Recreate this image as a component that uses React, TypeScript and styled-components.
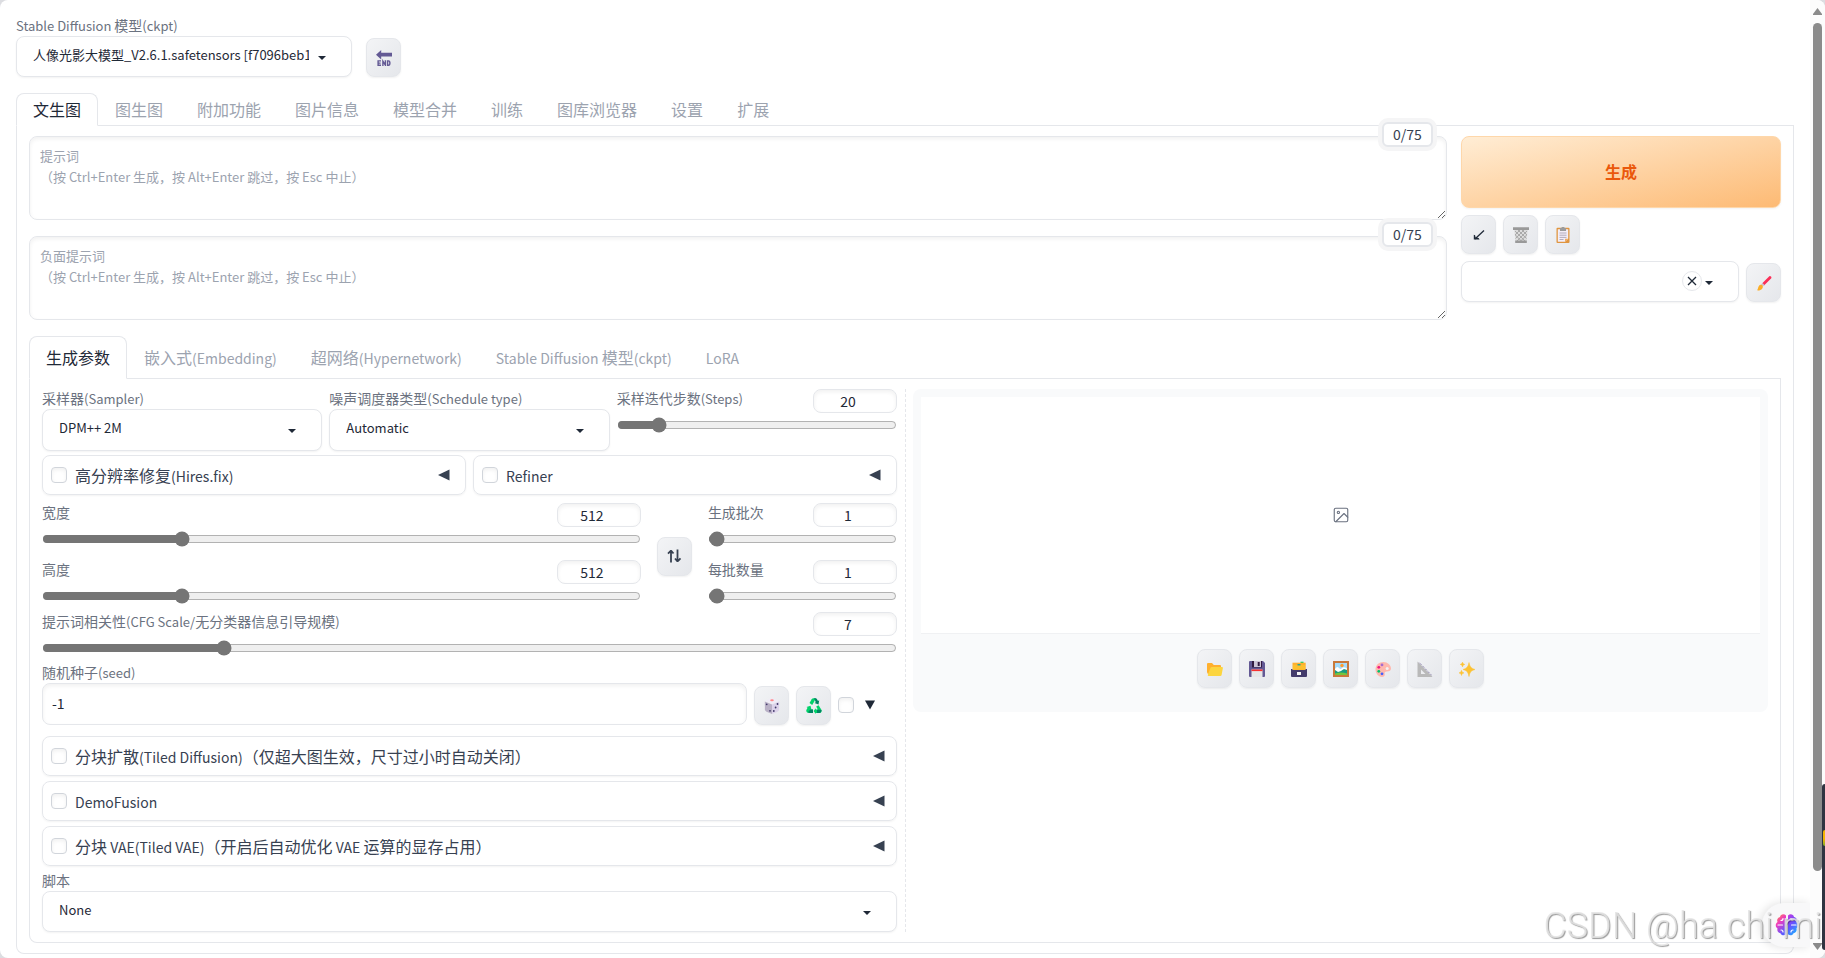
import React, { useState } from 'react';
import styled, { createGlobalStyle, css } from 'styled-components';

const line = '#e5e7eb';
const ink = '#1f2937';
const muted = '#6b7280';
const faint = '#9ca3af';

const GlobalStyle = createGlobalStyle`
  *, *::before, *::after { box-sizing: border-box; }
  body {
    margin: 0;
    background: #dcdde1;
    color: ${ink};
    font-family: "Noto Sans CJK SC", "Noto Sans", sans-serif;
    font-size: 14px;
    line-height: 20px;
  }
  button, input, select, textarea { font: inherit; color: inherit; margin: 0; }
`;

/* ---------- page frame ---------- */

const Page = styled.div`
  display: flex;
  min-height: 100vh;
  background: #fff;
  border-radius: 8px;
  overflow: hidden;
`;

const Main = styled.main`
  flex: 1;
  min-width: 0;
  padding: 16px 16px 4px;
`;

const ScrollRail = styled.aside`
  position: sticky;
  top: 0;
  width: 15px;
  height: 100vh;
  padding: 8px 3px;
  background: #fcfcfc;
  display: flex;
  flex-direction: column;
  align-items: center;
  gap: 7px;
`;

const ScrollTrack = styled.div`
  flex: 1;
  width: 9px;
`;

const ScrollThumb = styled.div`
  height: 93%;
  border-radius: 5px;
  background: #8b8b8b;
`;

/* ---------- shared controls ---------- */

const Latin = styled.span<{ $size: number }>`
  font-size: ${(p) => p.$size}px;
  line-height: 1;
`;

const Label = styled.label`
  display: block;
  margin-bottom: 2px;
  color: ${muted};
  line-height: 18px;
  white-space: nowrap;
`;

const SelectBox = styled.div<{ $tall?: boolean }>`
  position: relative;
  display: flex;
  height: ${(p) => (p.$tall ? 42 : 41)}px;
  border: 1px solid ${line};
  border-radius: 8px;
  background: #fff;
  box-shadow: 0 1px 2px rgba(0, 0, 0, 0.05);
`;

const SelectInput = styled.select`
  appearance: none;
  flex: 1;
  min-width: 0;
  border: 0;
  outline: 0;
  background: transparent;
  padding: 0 42px 4px 16px;
  font-size: 13px;
  text-overflow: clip;
`;

const CaretSlot = styled.span`
  position: absolute;
  right: 20px;
  top: 11px;
  display: flex;
  pointer-events: none;
`;

const ClearButton = styled.button`
  position: absolute;
  right: 36px;
  top: 9px;
  width: 20px;
  height: 20px;
  padding: 0;
  display: grid;
  place-items: center;
  border: 1px solid ${line};
  border-radius: 50%;
  background: #fff;
`;

const ToolButton = styled.button`
  flex: none;
  width: 35px;
  height: 39px;
  padding: 0;
  display: grid;
  place-items: center;
  border: 1px solid ${line};
  border-radius: 8px;
  background: linear-gradient(to bottom right, #f3f4f6, #e5e7eb);
  box-shadow: 0 1px 2px rgba(0, 0, 0, 0.06);
`;

const Checkbox = styled.input`
  appearance: none;
  flex: none;
  width: 16px;
  height: 16px;
  border: 1px solid #d1d5db;
  border-radius: 4px;
  background: #fff;
  box-shadow: inset 0 2px 4px rgba(0, 0, 0, 0.06);
`;

const PlainButton = styled.button`
  display: flex;
  padding: 0;
  border: 0;
  background: transparent;
`;

const insetField = css`
  border: 1px solid ${line};
  border-radius: 8px;
  background: #fff;
  outline: 0;
  box-shadow: inset 0 2px 4px rgba(0, 0, 0, 0.06);
`;

/* ---------- tabs ---------- */

const TabBar = styled.div`
  display: flex;
  border-bottom: 1px solid ${line};
`;

const Tab = styled.button<{ $active?: boolean; $tall?: boolean }>`
  height: ${(p) => (p.$tall ? 43 : 33)}px;
  margin-bottom: -1px;
  padding: 0 16px 2px;
  border: 1px solid ${(p) => (p.$active ? line : 'transparent')};
  border-bottom-color: ${(p) => (p.$active ? '#fff' : 'transparent')};
  border-radius: 8px 8px 0 0;
  background: ${(p) => (p.$active ? '#fff' : 'transparent')};
  color: ${(p) => (p.$active ? ink : faint)};
  font-size: 16px;
  line-height: 24px;
  white-space: nowrap;
`;

const TabPanel = styled.div`
  border: 1px solid ${line};
  border-top: 0;
  border-radius: 0 0 8px 8px;
  padding: 10px 12px;
`;

/* ---------- header and prompts ---------- */

const CheckpointRow = styled.div`
  display: flex;
  align-items: flex-end;
  gap: 14px;
  margin-bottom: 16px;
`;

const CheckpointField = styled.div`
  width: 336px;
`;

const PromptArea = styled.section`
  display: flex;
  gap: 14px;
  margin-bottom: 16px;
`;

const PromptColumn = styled.div`
  flex: 1;
  min-width: 0;
  display: flex;
  flex-direction: column;
  gap: 16px;
`;

const PromptBox = styled.div`
  position: relative;
  display: flex;
`;

const PromptInput = styled.textarea`
  ${insetField}
  flex: 1;
  height: 84px;
  padding: 8px 10px;
  font-size: 13px;
  line-height: 21px;
  resize: vertical;
  &::placeholder { color: ${faint}; opacity: 1; }
`;

const TokenCounter = styled.span`
  position: absolute;
  top: -14px;
  right: 14px;
  width: 51px;
  height: 25px;
  border: 2px solid ${line};
  border-radius: 6px;
  background: #fff;
  box-shadow: 0 0 0 4px #f5f5f6;
  color: #374151;
  line-height: 20px;
  text-align: center;
`;

const ActionColumn = styled.div`
  flex: 0 0 320px;
  display: flex;
  flex-direction: column;
  gap: 7px;
`;

const GenerateButton = styled.button`
  height: 72px;
  padding: 0 0 2px;
  border: 1px solid #fed7aa;
  border-radius: 8px;
  background: linear-gradient(to bottom right, #ffedd5, #fdba74);
  box-shadow: 0 1px 2px rgba(0, 0, 0, 0.05);
  color: #ea580c;
  font-size: 16px;
  font-weight: 700;
`;

const ToolRow = styled.div`
  display: flex;
  align-items: flex-end;
  gap: 7px;
`;

const Grow = styled.div`
  flex: 1;
  min-width: 0;
`;

/* ---------- parameters ---------- */

const Workspace = styled.div`
  display: grid;
  grid-template-columns: 1fr 1fr;
  column-gap: 16px;
`;

const Params = styled.section`
  position: relative;
  min-width: 0;
  display: flex;
  flex-direction: column;
  &::after {
    content: "";
    position: absolute;
    top: 0;
    bottom: 0;
    right: -9px;
    border-right: 1px dashed ${line};
  }
`;

const SamplerRow = styled.div`
  display: grid;
  grid-template-columns: repeat(3, 1fr);
  gap: 7px;
  margin-bottom: 4px;
`;

const PairRow = styled.div`
  display: grid;
  grid-template-columns: 1fr 1fr;
  gap: 7px;
  margin-bottom: 8px;
`;

const AccordionBox = styled.div<{ $wide?: boolean }>`
  display: flex;
  align-items: center;
  justify-content: space-between;
  height: 40px;
  padding: 0 ${(p) => (p.$wide ? 11 : 15)}px 0 8px;
  border: 1px solid ${line};
  border-radius: 8px;
  box-shadow: 0 1px 2px rgba(0, 0, 0, 0.05);
`;

const AccordionLabel = styled.label`
  display: flex;
  align-items: center;
  gap: 8px;
  color: #374151;
  font-size: 16px;
  line-height: 24px;
`;

const SliderBox = styled.div`
  height: 45px;
`;

const SliderHead = styled.div`
  display: flex;
  justify-content: space-between;
  height: 24px;
`;

const NumberInput = styled.input`
  ${insetField}
  appearance: textfield;
  width: 84px;
  height: 24px;
  padding: 0 22px 0 8px;
  text-align: center;
  &::-webkit-inner-spin-button { appearance: none; }
`;

const Range = styled.input`
  display: block;
  width: 100%;
  height: 16px;
  margin-top: 4px;
  accent-color: #757575;
  padding: 0 1px;
`;

const SizeRow = styled.div`
  display: flex;
  align-items: center;
  gap: 16px;
  margin-bottom: 7px;
`;

const SliderStack = styled.div<{ $share: number }>`
  flex: ${(p) => p.$share} 1 0;
  min-width: 0;
  display: flex;
  flex-direction: column;
  gap: 12px;
`;

const SwapCell = styled.div`
  padding-top: 4px;
`;

const SeedRow = styled.div`
  display: flex;
  align-items: flex-end;
  gap: 7px;
  margin: 6px 0 11px;
`;

const SeedInput = styled.input`
  ${insetField}
  display: block;
  width: 100%;
  height: 42px;
  padding: 0 9px 2px;
`;

const ExtraToggle = styled.div`
  display: flex;
  align-items: center;
  gap: 10px;
  width: 59px;
  padding-bottom: 12px;
`;

const Stack = styled.div`
  display: flex;
  flex-direction: column;
  gap: 5px;
`;

/* ---------- gallery ---------- */

const Gallery = styled.section`
  align-self: start;
  padding: 8px 8px 24px;
  border-radius: 8px;
  background: #f9fafb;
`;

const Preview = styled.div`
  display: grid;
  place-items: center;
  height: 237px;
  margin-bottom: 15px;
  border-bottom: 1px solid #f0f1f3;
  background: #fff;
`;

const GalleryTools = styled.div`
  display: flex;
  justify-content: center;
  gap: 7px;
`;

/* ---------- floating items ---------- */

const AssistantPill = styled.button`
  position: fixed;
  right: 15px;
  bottom: 11px;
  width: 48px;
  height: 44px;
  padding: 0 0 0 13px;
  display: flex;
  align-items: center;
  border: 0;
  border-radius: 22px 0 0 22px;
  background: #f8f8f9;
  box-shadow: -2px 0 10px rgba(0, 0, 0, 0.12);
  clip-path: inset(-16px 0 -11px -16px);
`;

const SideDock = styled.div`
  position: fixed;
  right: 0;
  bottom: 8px;
  width: 3px;
  height: 166px;
  padding-top: 46px;
  border-radius: 3px 0 0 3px;
  background: #2f3441;
  overflow: hidden;
`;

const DockLight = styled.div`
  height: 16px;
  margin-left: 1px;
  border-radius: 8px 0 0 8px;
  background: linear-gradient(#f5b400 55%, #7fae2c);
`;

const Watermark = styled.div`
  position: fixed;
  right: 3px;
  bottom: 12px;
  color: rgba(228, 228, 228, 0.85);
  font-family: Roboto, "Liberation Sans", sans-serif;
  font-size: 36px;
  font-weight: 300;
  line-height: 40px;
  white-space: nowrap;
  text-shadow: 1px 1px 1px rgba(0, 0, 0, 0.4);
  pointer-events: none;
`;

/* ---------- icons ---------- */

const Icon = ({ children, size = 16 }: { children: React.ReactNode; size?: number }) => (
  <svg width={size} height={size} viewBox="0 0 16 16" aria-hidden="true">{children}</svg>
);

const Caret = () => (
  <svg width="18" height="18" viewBox="0 0 18 18" fill={ink} aria-hidden="true"><path d="M5 8l4 4 4-4z" /></svg>
);

const Triangle = ({ dir }: { dir: 'left' | 'down' }) => (
  <svg width="12" height="12" viewBox="0 0 12 12" fill={dir === 'left' ? '#374151' : ink} aria-hidden="true">
    <path d={dir === 'left' ? 'M0 6L11.500 .5v11z' : 'M1 1.500h10L6 10.500z'} />
  </svg>
);

const RailArrow = ({ up }: { up?: boolean }) => (
  <svg width="9" height="8" viewBox="0 0 9 8" fill="#8b8b8b" aria-hidden="true">
    <path d={up ? 'M4.500 0L9 6v1H0V6z' : 'M0 1h9v1L4.500 8 0 2z'} />
  </svg>
);

const EndIcon = () => (
  <Icon>
    <path d="M0 4.700L5.200 0v2.800H16v3.800H5.200v2.800z" fill="#635994" />
    <g fill="none" stroke="#635994" strokeWidth="1.400">
      <path d="M5 10.900H2.100v4.400H5M2.100 13.100h2.500M6.900 15.900v-4.700l2.500 4v-4.900M11.600 10.900v4.400h.9q1.400 0 1.400-2.200t-1.400-2.200z" />
    </g>
  </Icon>
);

const ArrowIcon = () => (
  <Icon>
    <path d="M13 3.500L4 12" fill="none" stroke="#1f2937" strokeWidth="1.300" />
    <path d="M2.800 7.800l1.300.4.500 2.300 3 .6 1 1.400H2.800z" fill="#1f2937" />
  </Icon>
);

const TrashIcon = () => (
  <Icon>
    <path d="M1.300 3h13.400l-1.200 12H2.500z" fill="#dcdcdc" />
    <path d="M2 4l10 10M5 3l8.500 8.500M9 3l5 5M2.300 8l6.500 6.500M14 4L4 14M11 3L2.500 11.500M7 3L2 8M13.700 8l-6.500 6.500" stroke="#a3a3a3" strokeWidth=".9" />
    <path d="M0 .3h16V3H0zM2.200 13.600h11.600V16H2.200z" fill="#999" />
  </Icon>
);

const ClipboardIcon = () => (
  <Icon>
    <rect x="1.500" y=".7" width="13" height="15.300" rx="1" fill="#e0953f" />
    <path d="M2.800 2.300h10.400v9.400l-3.200 3H2.800z" fill="#f3eef8" />
    <path d="M10 14.700v-3h3.200z" fill="#efad62" />
    <path d="M5 1h1.500a1.500 1.500 0 013 0H11v3H5z" fill="#9b9b9b" />
    <path d="M4.500 6h7M4.500 8.200h7M4.500 10.400h7M4.500 12.500h4" stroke="#b4acbc" />
  </Icon>
);

const BrushIcon = () => (
  <Icon>
    <path d="M6 8.500L13.300 1.200a1.500 1.500 0 012 2L8 10.500z" fill="#fb2f58" />
    <path d="M5 9.500l1.500-1.500 2 2L7 11.500z" fill="#c9c3d3" />
    <path d="M1 15.300c1.500-1 .8-5 3.600-5.500 2-.2 3 2 1.700 3.600C5 15.300 2.500 15.600 1 15.300z" fill="#fcae27" />
  </Icon>
);

const SwapIcon = () => (
  <Icon>
    <path d="M5 14.500V3M2 5.700L5 2.500M11.500 1.500V13M14.500 10.300L11.500 13.500M5 2.500l2.500 3M11.500 13.500l-2.500-3" fill="none" stroke="#374151" strokeWidth="1.800" />
  </Icon>
);

const DiceIcon = () => (
  <Icon>
    <path d="M8 0l7 3-7 3-7-3z" fill="#f0ebf7" />
    <ellipse cx="8" cy="2.200" rx="1.800" ry="1" fill="#f88" />
    <path d="M.8 3.500L8 6.500V16l-5.500-2.300Q1 13 .9 11.500z" fill="#b9b0c6" />
    <path d="M15.200 3.500L8 6.500V16l5.500-2.300q1.500-.7 1.600-2.200z" fill="#dcd2ea" />
    <g fill="#433b6b"><circle cx="2.700" cy="6.300" r=".9" /><circle cx="6" cy="12.800" r=".9" /><circle cx="13.500" cy="6" r=".9" /><circle cx="11.600" cy="9.500" r=".9" /><circle cx="9.800" cy="13" r=".9" /></g>
  </Icon>
);

const RecycleIcon = () => (
  <Icon>
    <path d="M5.700 1.200Q6.300.2 7.500.2h2.300L8 4 6.200 7 3.500 5z" fill="#00d26a" />
    <path d="M8 .2h1.700q.8 0 1.300 1l1 1.700 1.200-.7L12.500 6.500 8.500 5l1.300-.8z" fill="#008463" />
    <path d="M12.600 7.200l2.800 4.500q.8 1.700-1 3.300H9.800v1L7.500 13l2.300-2.800v1.300h2l-1.600-3z" fill="#00d26a" />
    <path d="M15.600 12.300q-.1 2.200-2 2.700H11v-3.300h2.500z" fill="#008463" />
    <path d="M7 11.600V15H2.500Q.8 15 .3 13.200q-.2-.8.3-1.700l1-1.800L.5 9l4-1.200 1 4-1-.6-.3.400z" fill="#00d26a" />
    <path d="M4.300 11.600H7V15H3.500q-1.500-.2-1-1.500z" fill="#008463" />
  </Icon>
);

const FolderIcon = () => (
  <Icon>
    <path d="M0 3q0-1 1-1h4l1.800 2H13q1 0 1 1v8H2q-2 0-2-2z" fill="#ffb02e" />
    <path d="M3.400 7q.3-1 1.300-1H15q1 0 .9 1l-1.300 7q-.2 1-1.300 1H1.700q-1.200 0-.9-1z" fill="#fcd53f" />
  </Icon>
);

const FloppyIcon = () => (
  <Icon>
    <path d="M1 0h13l2 2v13q0 1-1 1H1q-1 0-1-1V1q0-1 1-1z" fill="#635994" />
    <path d="M3 0h10v6.500H3z" fill="#321b41" />
    <path d="M5 0h7v6H5z" fill="#cdc4d6" />
    <path d="M8.700 1h2v4h-2z" fill="#321b41" />
    <path d="M2.500 8.500h11V16h-11z" fill="#e6e6e6" />
    <path d="M2.500 8.500h11v1.600h-11z" fill="#f8312f" />
  </Icon>
);

const CardBoxIcon = () => (
  <Icon>
    <path d="M9.500.7h3v2h-3z" fill="#00d26a" />
    <path d="M1.500 1.700h13.200V10H1.500z" fill="#ffb02e" />
    <path d="M2 4h12v4.500H2z" fill="#fcc02f" />
    <path d="M6.500 3h3v1.500h-3z" fill="#26a69a" />
    <path d="M0 8h1.500v1h13V8H16v7q0 1-1 1H1q-1 0-1-1z" fill="#433b6b" />
    <path d="M6 11h4v3H6z" fill="#f4f4f4" />
  </Icon>
);

const FrameIcon = () => (
  <Icon>
    <path d="M0 0h16v16H0z" fill="#c8793b" />
    <path d="M2 2h12v12H2z" fill="#a5dcfb" />
    <circle cx="9" cy="4.500" r="1.700" fill="#ff9d2e" />
    <path d="M2 8q2-3 3.500-1.500T8 8q2-3 6-.5V12H2z" fill="#fff" />
    <path d="M2 9l3 2 3-1 3-2 3 1v5H2z" fill="#179c81" />
    <path d="M2 12.500q6-2 12 0V14H2z" fill="#74c43c" />
  </Icon>
);

const PaletteIcon = () => (
  <Icon>
    <path d="M8.500 1C4 1 .5 4 .5 8.500S4 16 7 16c2 0 3.300-1.500 2.700-3-.5-1.400.3-2.500 2-2.500 3 0 4.300-1 4.300-3C16 4 12.500 1 8.500 1z" fill="#ffb8ae" />
    <circle cx="12.200" cy="7.500" r="1.500" fill="#f2f2f4" />
    <circle cx="7" cy="3.900" r="1.400" fill="#a56bd0" />
    <circle cx="3.800" cy="6.300" r="1.400" fill="#f1177f" />
    <circle cx="3.800" cy="10.300" r="1.400" fill="#00c26a" />
    <circle cx="7" cy="12.800" r="1.400" fill="#3f5fff" />
  </Icon>
);

const RulerIcon = () => (
  <Icon>
    <path d="M.5.5L15.500 16H.5z" fill="#b9b9b9" />
    <path d="M4 8.500l4.500 4.500H4z" fill="#ecedf0" />
    <path d="M2.500 1.800L15 14.700" stroke="#6c5f96" strokeDasharray="1 1.200" />
  </Icon>
);

const SparkIcon = () => (
  <Icon>
    <path d="M10 1.500c.9 4.300 2 5.500 6 7-4 1.200-5.100 2.700-6 7-.9-4.300-2-5.800-6-7 4-1.500 5.100-2.700 6-7zM3.500 1c.4 1.500.8 2 2.300 2.400C4.300 3.800 3.900 4.300 3.500 6 3.100 4.300 2.700 3.800 1.200 3.400 2.700 3 3.100 2.500 3.500 1zM2.500 9.300c.4 1.600.9 2.200 2.500 2.600-1.600.4-2.100 1-2.500 2.600C2.100 12.900 1.600 12.300 0 11.900c1.600-.4 2.100-1 2.500-2.600z" fill="#fcc234" stroke="#fcc234" strokeWidth=".5" />
  </Icon>
);

const PictureIcon = () => (
  <svg width="18" height="18" viewBox="0 0 24 24" fill="none" stroke="#6b7280" strokeWidth="1.500" strokeLinecap="round" strokeLinejoin="round" aria-hidden="true">
    <rect x="3" y="3" width="18" height="18" rx="2" />
    <circle cx="8.500" cy="8.500" r="1.500" />
    <path d="M21 15l-5-5L5 21" />
  </svg>
);

const BrainIcon = () => (
  <svg width="24" height="24" viewBox="0 0 24 24" aria-hidden="true">
    <defs>
      <linearGradient id="brainLeft" x1="0" y1="0" x2=".5" y2="1">
        <stop offset="0" stopColor="#ff9a2e" />
        <stop offset=".45" stopColor="#ee3ac0" />
        <stop offset="1" stopColor="#5b5bff" />
      </linearGradient>
      <linearGradient id="brainRight" x1="0" y1="0" x2=".5" y2="1">
        <stop offset="0" stopColor="#c43be0" />
        <stop offset=".5" stopColor="#6a4dff" />
        <stop offset="1" stopColor="#25a5ff" />
      </linearGradient>
    </defs>
    <path d="M11 2.500C9 .5 5.500 1.200 5 4 2.500 4.500 1.500 7 2.500 9 .2 10.500.2 14 2.500 15.500c-.8 2.700 1 4.500 3 4.700.8 2.300 3.800 2.800 5.500 1z" fill="url(#brainLeft)" />
    <path d="M13 2.500c2-2 5.500-1.300 6 1.500 2.500.5 3.500 3 2.500 5 2.300 1.500 2.300 5 0 6.500.8 2.700-1 4.500-3 4.700-.8 2.300-3.800 2.800-5.500 1z" fill="url(#brainRight)" />
    <path d="M3 12h4.500M6 7.500q2 0 2-2M6 17q2 0 2 2M21 12h-4.500M18 7.500q-2 0-2-2M18 17q-2 0-2 2" fill="none" stroke="#fff" strokeWidth="1.200" strokeLinecap="round" />
  </svg>
);

/* ---------- composed parts ---------- */

/* Sets Latin runs a step smaller so they balance with the Chinese characters. */
const Mixed = ({ text, size }: { text: string; size: number }) => (
  <span>
    {text.split(/([\x20-\x7e]+)/).filter(Boolean).map((run, i) =>
      /^[\x20-\x7e]/.test(run) ? <Latin key={i} $size={size}>{run}</Latin> : run,
    )}
  </span>
);

type DropdownProps = { id: string; label?: string; value: string; tall?: boolean; clearable?: boolean };

const Dropdown = ({ id, label, value, tall, clearable }: DropdownProps) => (
  <div>
    {label && <Label htmlFor={id}><Mixed text={label} size={13} /></Label>}
    <SelectBox $tall={tall}>
      <SelectInput id={id} aria-label={label ?? 'Styles'}>
        <option>{value}</option>
      </SelectInput>
      {clearable && (
        <ClearButton aria-label="Clear">
          <svg width="10" height="10" viewBox="0 0 10 10" stroke={ink} strokeWidth="1.300" aria-hidden="true"><path d="M1 1l8 8M9 1L1 9" /></svg>
        </ClearButton>
      )}
      <CaretSlot><Caret /></CaretSlot>
    </SelectBox>
  </div>
);

type SliderProps = { id: string; label: string; min: number; max: number; initial: number; step?: number };

const Slider = ({ id, label, min, max, initial, step = 1 }: SliderProps) => {
  const [value, setValue] = useState(initial);
  const update = (e: React.ChangeEvent<HTMLInputElement>) => setValue(Number(e.target.value));
  return (
    <SliderBox>
      <SliderHead>
        <Label htmlFor={id}><Mixed text={label} size={13} /></Label>
        <NumberInput id={id} type="number" value={value} onChange={update} />
      </SliderHead>
      <Range type="range" aria-label={label} min={min} max={max} step={step} value={value} onChange={update} />
    </SliderBox>
  );
};

const Accordion = ({ title, wide }: { title: string; wide?: boolean }) => (
  <AccordionBox $wide={wide}>
    <AccordionLabel><Checkbox type="checkbox" /><Mixed text={title} size={14} /></AccordionLabel>
    <PlainButton aria-label={`Expand ${title}`}><Triangle dir="left" /></PlainButton>
  </AccordionBox>
);

const Prompt = ({ title }: { title: string }) => (
  <PromptBox>
    <PromptInput aria-label={title} placeholder={`${title}\n（按 Ctrl+Enter 生成，按 Alt+Enter 跳过，按 Esc 中止）`} />
    <TokenCounter>0/75</TokenCounter>
  </PromptBox>
);

const topTabs = ['文生图', '图生图', '附加功能', '图片信息', '模型合并', '训练', '图库浏览器', '设置', '扩展'];
const subTabs = ['生成参数', '嵌入式(Embedding)', '超网络(Hypernetwork)', 'Stable Diffusion 模型(ckpt)', 'LoRA'];
const galleryTools: [string, React.ReactNode][] = [
  ['Open folder', <FolderIcon />],
  ['Save', <FloppyIcon />],
  ['Save zip', <CardBoxIcon />],
  ['Send to img2img', <FrameIcon />],
  ['Send to inpaint', <PaletteIcon />],
  ['Send to extras', <RulerIcon />],
  ['Upscale', <SparkIcon />],
];

export default function App() {
  return (
    <>
      <GlobalStyle />
      <Page>
        <Main>
          <CheckpointRow>
            <CheckpointField>
              <Dropdown id="ckpt" label="Stable Diffusion 模型(ckpt)" value="人像光影大模型_V2.6.1.safetensors [f7096beb1f]" />
            </CheckpointField>
            <ToolButton aria-label="Refresh checkpoints"><EndIcon /></ToolButton>
          </CheckpointRow>

          <TabBar role="tablist">
            {topTabs.map((t, i) => <Tab key={t} role="tab" aria-selected={i === 0} $active={i === 0}>{t}</Tab>)}
          </TabBar>
          <TabPanel>
            <PromptArea>
              <PromptColumn>
                <Prompt title="提示词" />
                <Prompt title="负面提示词" />
              </PromptColumn>
              <ActionColumn>
                <GenerateButton>生成</GenerateButton>
                <ToolRow>
                  <ToolButton aria-label="Read parameters"><ArrowIcon /></ToolButton>
                  <ToolButton aria-label="Clear prompt"><TrashIcon /></ToolButton>
                  <ToolButton aria-label="Apply style"><ClipboardIcon /></ToolButton>
                </ToolRow>
                <ToolRow>
                  <Grow><Dropdown id="styles" value="" clearable /></Grow>
                  <ToolButton aria-label="Edit styles"><BrushIcon /></ToolButton>
                </ToolRow>
              </ActionColumn>
            </PromptArea>

            <TabBar role="tablist">
              {subTabs.map((t, i) => (
                <Tab key={t} role="tab" aria-selected={i === 0} $active={i === 0} $tall><Mixed text={t} size={14} /></Tab>
              ))}
            </TabBar>
            <TabPanel>
              <Workspace>
                <Params>
                  <SamplerRow>
                    <Dropdown id="sampler" label="采样器(Sampler)" value="DPM++ 2M" tall />
                    <Dropdown id="schedule" label="噪声调度器类型(Schedule type)" value="Automatic" tall />
                    <Slider id="steps" label="采样迭代步数(Steps)" min={1} max={150} initial={20} />
                  </SamplerRow>
                  <PairRow>
                    <Accordion title="高分辨率修复(Hires.fix)" />
                    <Accordion title="Refiner" />
                  </PairRow>
                  <SizeRow>
                    <SliderStack $share={19}>
                      <Slider id="width" label="宽度" min={64} max={2048} step={8} initial={512} />
                      <Slider id="height" label="高度" min={64} max={2048} step={8} initial={512} />
                    </SliderStack>
                    <SwapCell><ToolButton aria-label="Swap width and height"><SwapIcon /></ToolButton></SwapCell>
                    <SliderStack $share={6}>
                      <Slider id="batches" label="生成批次" min={1} max={100} initial={1} />
                      <Slider id="batch-size" label="每批数量" min={1} max={8} initial={1} />
                    </SliderStack>
                  </SizeRow>
                  <Slider id="cfg" label="提示词相关性(CFG Scale/无分类器信息引导规模)" min={1} max={30} initial={7} />
                  <SeedRow>
                    <Grow>
                      <Label htmlFor="seed"><Mixed text="随机种子(seed)" size={13} /></Label>
                      <SeedInput id="seed" defaultValue="-1" />
                    </Grow>
                    <ToolButton aria-label="Random seed"><DiceIcon /></ToolButton>
                    <ToolButton aria-label="Reuse seed"><RecycleIcon /></ToolButton>
                    <ExtraToggle>
                      <Checkbox type="checkbox" aria-label="Extra seed options" />
                      <PlainButton aria-label="Show extra seed options"><Triangle dir="down" /></PlainButton>
                    </ExtraToggle>
                  </SeedRow>
                  <Stack>
                    <Accordion wide title="分块扩散(Tiled Diffusion)（仅超大图生效，尺寸过小时自动关闭）" />
                    <Accordion wide title="DemoFusion" />
                    <Accordion wide title="分块 VAE(Tiled VAE)（开启后自动优化 VAE 运算的显存占用）" />
                    <Dropdown id="script" label="脚本" value="None" />
                  </Stack>
                </Params>

                <Gallery>
                  <Preview><PictureIcon /></Preview>
                  <GalleryTools>
                    {galleryTools.map(([name, icon]) => <ToolButton key={name} aria-label={name}>{icon}</ToolButton>)}
                  </GalleryTools>
                </Gallery>
              </Workspace>
            </TabPanel>
          </TabPanel>
        </Main>
        <ScrollRail aria-hidden="true">
          <RailArrow up />
          <ScrollTrack><ScrollThumb /></ScrollTrack>
          <RailArrow />
        </ScrollRail>
      </Page>
      <AssistantPill aria-label="Assistant"><BrainIcon /></AssistantPill>
      <SideDock><DockLight /></SideDock>
      <Watermark>CSDN @ha chi mi</Watermark>
    </>
  );
}
